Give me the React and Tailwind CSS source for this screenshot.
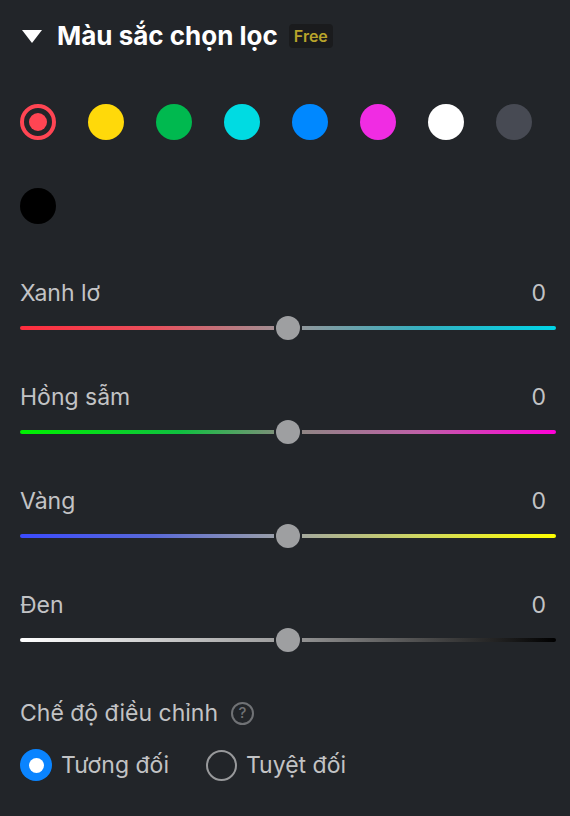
import { useState } from "react";

const swatches = [
  "#ff4553",
  "#ffd90a",
  "#00b94f",
  "#00dbe2",
  "#0088ff",
  "#f02ce3",
  "#ffffff",
  "#474a53",
  "#000000",
];

const sliders = [
  { label: "Xanh lơ", bg: "linear-gradient(to right, #ff2d3d, #e9505c 25%, #9b9598 50%, #35b0c0 75%, #00d4e6)" },
  { label: "Hồng sẫm", bg: "linear-gradient(to right, #00f000, #10c040 30%, #8a8a80 50%, #c060a8 75%, #ff00d8)" },
  { label: "Vàng", bg: "linear-gradient(to right, #3b4bff, #5a6ad8 25%, #a0a4a4 50%, #d0d860 75%, #ffff00)" },
  { label: "Đen", bg: "linear-gradient(to right, #ffffff, #9a9a9a 50%, #000000)" },
];

const Slider = ({ label, bg }) => (
  <div className="flex flex-col">
    <div className="flex justify-between items-center h-[28px] leading-[28px] text-[23px] text-[#c2c3c5] pr-[10px]">
      <span>{label}</span>
      <span>0</span>
    </div>
    <div className="relative h-[24px] mt-[9px] flex items-center">
      <div className="w-full h-[4px] rounded-full" style={{ background: bg }} />
      <div className="absolute left-[254px] top-0 w-[28px] h-[24px] flex items-center justify-center bg-[#222529]">
        <div className="w-[24px] h-[24px] rounded-full bg-[#9e9fa1]" />
      </div>
    </div>
  </div>
);

const Radio = ({ checked }) =>
  checked ? (
    <span className="w-[32px] h-[32px] rounded-full bg-[#0a84ff] flex items-center justify-center">
      <span className="w-[15px] h-[15px] rounded-full bg-white" />
    </span>
  ) : (
    <span className="w-[31px] h-[31px] rounded-full border-[2px] border-[#98999b]" />
  );

export default function App() {
  const [selected, setSelected] = useState(0);
  const [mode, setMode] = useState("rel");

  return (
    <div className="w-[570px] min-h-[816px] bg-[#222529] pl-5 pr-[14px] pt-[24px] font-['Inter',sans-serif]">
      {/* Header */}
      <div className="flex items-center h-[24px]">
        <svg width="20" height="13" viewBox="0 0 20 13" className="ml-[2px]">
          <path d="M0 0 H20 L10 13 Z" fill="#fff" />
        </svg>
        <h2 className="ml-[15px] text-[26px] font-bold text-white leading-none">Màu sắc chọn lọc</h2>
        <span className="ml-[11px] h-[24px] px-[5px] flex items-center rounded bg-[#1a1b1d] text-[16px] font-semibold text-[#b8a42b]">
          Free
        </span>
      </div>

      {/* Swatches */}
      <div className="mt-[56px] grid grid-cols-[repeat(8,36px)] gap-x-[32px] gap-y-[48px]">
        {swatches.map((c, i) => (
          <button
            key={c}
            onClick={() => setSelected(i)}
            className="w-[36px] h-[36px] rounded-full flex items-center justify-center"
            style={
              selected === i
                ? { border: `4px solid ${c}` }
                : { background: c }
            }
          >
            {selected === i && (
              <span className="w-[18px] h-[18px] rounded-full" style={{ background: c }} />
            )}
          </button>
        ))}
      </div>

      {/* Sliders */}
      <div className="mt-[55px] flex flex-col gap-[43px]">
        {sliders.map((s) => (
          <Slider key={s.label} {...s} />
        ))}
      </div>

      {/* Mode */}
      <div className="mt-[47px] flex items-center gap-[13px] h-[28px] text-[23px] text-[#c2c3c5]">
        <span>Chế độ điều chỉnh</span>
        <span className="w-[23px] h-[23px] rounded-full border-[2px] border-[#707275] text-[#707275] text-[15px] font-medium flex items-center justify-center">
          ?
        </span>
      </div>
      <div className="mt-[21px] flex items-center text-[23px] text-[#c2c3c5]">
        <button onClick={() => setMode("rel")} className="flex items-center gap-[9px]">
          <Radio checked={mode === "rel"} />
          <span>Tương đối</span>
        </button>
        <button onClick={() => setMode("abs")} className="ml-[37px] flex items-center gap-[9px]">
          <Radio checked={mode === "abs"} />
          <span>Tuyệt đối</span>
        </button>
      </div>
    </div>
  );
}
